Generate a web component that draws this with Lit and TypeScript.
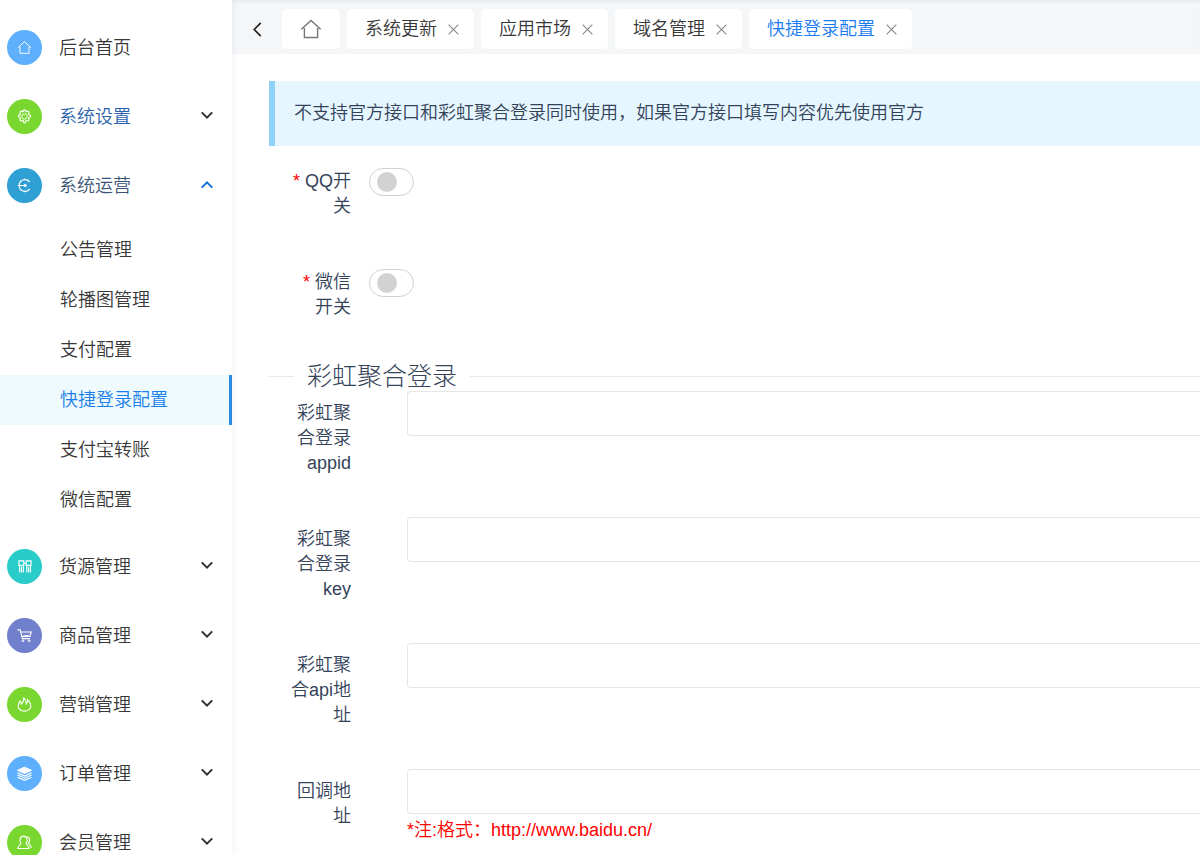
import { LitElement, html, css, svg } from "lit";
import { customElement, property, state } from "lit/decorators.js";
import { classMap } from "lit/directives/class-map.js";

const icons: Record<string, unknown> = {
  home: svg`<path d="M1 8.2 8 1.8l7 6.4M3.2 7.2v7h9.6v-7"/>`,
  gear: svg`<circle cx="8" cy="8" r="2.800"/><path d="M8 .9c1.100 0 1.300.5 1.500 1.900l.5.2c1.200-.9 1.800-1 2.500-.2s.7 1.400-.2 2.500l.3.7c1.400.2 2 .5 2 1.500s-.5 1.400-2 1.600l-.3.700c.9 1.100.9 1.700.2 2.500s-1.400.7-2.500-.2l-.5.2C9.300 13.700 9.100 15.100 8 15.100s-1.300-1.400-1.500-2.800l-.5-.2c-1.200.9-1.800.9-2.500.2s-.7-1.400.2-2.500l-.3-.7c-1.400-.2-2-.6-2-1.600s.6-1.300 2-1.500l.3-.7c-.9-1.100-.9-1.700-.2-2.500s1.300-.7 2.500.2l.5-.2C6.700 1.400 6.900.9 8 .9z" stroke-width="1.200"/>`,
  run: svg`<path d="M13.600 4.200A6.300 6.300 0 1 0 13.600 11.800M1 8h7M8 .8v1.500M8 13.700v1.500M3 3l1 1M3 13l1-1M13 3l-.8 1M13 13l-.8-1" stroke-width="1.300"/><circle cx="8.800" cy="8" r="1.200" fill="currentColor"/>`,
  goods: svg`<path d="M2 2h5.200v4.800H2zM9.800 2H15v4.800H9.800zM2.800 6.800V14.500M4.800 8.500v6M6.800 6.800V14.500M10.400 6.800V14.500M12.400 8.500v6M14.400 6.800V14.500M7.200 4.500h2.600" stroke-width="1.200"/>`,
  cart: svg`<path d="M.5 2h2.800l2.500 9.300h8M3.900 4.300h11.300L13.800 9H5.200M6.500 8.600l6-.8" stroke-width="1.200"/><circle cx="6.300" cy="13.600" r="1"/><circle cx="12.900" cy="13.600" r="1"/>`,
  fire: svg`<path d="M5.500 14.600C3 13.800 1.300 12 1.300 9.600c0-2 1.300-3.200 1.700-5.400 1.200.9 1.700 2 1.700 3.300C6.500 6 7.300 3.700 7.200 1c1.900 1.700 2.700 3.800 2.600 6.200.8-.8 1.600-2.200 1.600-4.400 1.900 1.900 3.300 4.300 3.300 6.900 0 2.500-1.600 4.200-4.200 4.900" stroke-width="1.200"/><path d="M5.500 14.600c1.600.6 3.400.6 5 0" stroke-width="1.200"/>`,
  layers: svg`<path d="M8 1.200 15.500 4.600 8 8 .5 4.600z" fill="currentColor"/><path d="m.5 7.300 7.500 3.400 7.500-3.400M.5 9.600 8 13l7.500-3.400M.5 11.900 8 15.300l7.500-3.400" stroke-width="1.200"/>`,
  user: svg`<path d="M4.300 9C3 7.700 2.800 5.800 3.300 4.300 3.900 2.400 5.200 1.200 7 1.200s3.100 1.200 3.700 3.100c.5 1.500.2 3.500-1.100 4.700.2 1.500 3.300 1.900 3.300 5.400H.9C.9 10.900 4.100 10.500 4.300 9zM10.800 1.800c1.700.3 2.600 1.700 2.700 3.300.1 1.400-.4 2.600-1.300 3.400.4 1.500 3 2.100 3 5.400" stroke-width="1.200"/>`,
  up: svg`<path d="m2 11 6-6 6 6" stroke-width="2.400"/>`,
  down: svg`<path d="m2 5 6 6 6-6" stroke-width="2.400"/>`,
  back: svg`<path d="M11.500 1 4.500 8l7 7" stroke-width="1.800"/>`,
  close: svg`<path d="m2 2 12 12M14 2 2 14" stroke-width="1.400"/>`,
};

@customElement("ui-icon")
class UiIcon extends LitElement {
  @property() name = "";
  static styles = css`
    :host { display: inline-flex; width: 15px; height: 15px; }
    .glyph { width: 100%; height: 100%; fill: none; stroke: currentColor; stroke-width: 1; }
  `;
  render() {
    return html`<svg class="glyph" viewBox="0 0 16 16" aria-hidden="true">${icons[this.name]}</svg>`;
  }
}

interface MenuItem {
  label: string;
  icon: string;
  tone: string;
  children?: string[];
}

const menu: MenuItem[] = [
  { label: "后台首页", icon: "home", tone: "sky" },
  { label: "系统设置", icon: "gear", tone: "green", children: [] },
  {
    label: "系统运营", icon: "run", tone: "blue",
    children: ["公告管理", "轮播图管理", "支付配置", "快捷登录配置", "支付宝转账", "微信配置"],
  },
  { label: "货源管理", icon: "goods", tone: "teal", children: [] },
  { label: "商品管理", icon: "cart", tone: "violet", children: [] },
  { label: "营销管理", icon: "fire", tone: "green", children: [] },
  { label: "订单管理", icon: "layers", tone: "sky", children: [] },
  { label: "会员管理", icon: "user", tone: "green", children: [] },
];

@customElement("side-menu")
class SideMenu extends LitElement {
  @state() private open = "系统运营";
  static styles = css`
    :host { display: block; width: 232px; flex: none; padding-top: 13px; box-sizing: border-box; overflow: hidden; background: #fff; box-shadow: 0 0 8px rgba(0, 40, 60, 0.08); z-index: 1; }
    .item { display: flex; align-items: center; gap: 17px; width: 100%; height: 69px; padding: 0 18px 0 7px; border: 0; background: none; font: inherit; color: #383838; text-align: left; cursor: pointer; }
    .item.hovered { color: #2b62ae; }
    .item.open { color: #3a5575; }
    .disc { display: flex; align-items: center; justify-content: center; flex: none; width: 35px; height: 35px; border-radius: 50%; color: #fff; }
    .sky { background: #5fb0fc; }
    .green { background: #7ad72f; }
    .blue { background: #2fa0d4; }
    .teal { background: #2accca; }
    .violet { background: #7180cd; }
    .label { flex: 1; padding-top: 2px; }
    .arrow { width: 14px; height: 14px; padding-bottom: 4px; color: #333; }
    .open .arrow { color: #1272d8; padding-bottom: 2px; }
    .sub { padding: 5px 0 7px; }
    .link { display: block; padding: 0 0 0 60px; line-height: 50px; color: #383838; text-decoration: none; }
    .link.active { background: #effaff; color: #1a7fe8; border-right: 3px solid #2a8be0; }
  `;
  render() {
    return html`<nav aria-label="主菜单">
      ${menu.map((m) => {
        const open = this.open === m.label;
        return html`
          <button
            class=${classMap({ item: true, open, hovered: m.label === "系统设置" })}
            @click=${() => (this.open = open ? "" : m.label)}
          >
            <span class="disc ${m.tone}"><ui-icon name=${m.icon}></ui-icon></span>
            <span class="label">${m.label}</span>
            ${m.children ? html`<ui-icon class="arrow" name=${open ? "up" : "down"}></ui-icon>` : ""}
          </button>
          ${open && m.children?.length
            ? html`<div class="sub">
                ${m.children.map((c) => html`<a href="#" class=${classMap({ link: true, active: c === "快捷登录配置" })}>${c}</a>`)}
              </div>`
            : ""}
        `;
      })}
    </nav>`;
  }
}

@customElement("tab-bar")
class TabBar extends LitElement {
  static styles = css`
    :host { display: flex; align-items: center; gap: 7px; height: 54px; padding-top: 4px; box-sizing: border-box; background: #f5f6f8; box-shadow: inset 0 4px 4px -3px rgba(0, 0, 0, 0.08); }
    .btn { display: flex; align-items: center; justify-content: center; padding: 0; border: 0; background: none; font: inherit; color: inherit; cursor: pointer; }
    .back { width: 43px; height: 40px; padding-left: 7px; color: #222; }
    .tab { display: flex; align-items: center; height: 40px; border-radius: 5px; background: #fff; color: #383838; white-space: nowrap; }
    .home { width: 58px; color: #777; }
    .house { width: 22px; height: 22px; }
    .page { gap: 10px; padding: 0 14px 0 18px; }
    .name { padding-top: 1px; }
    .close { color: #888; }
    .cross { width: 13px; height: 13px; }
    .active { color: #1a7cf0; }
  `;
  render() {
    return html`
      <button class="btn back" aria-label="后退"><ui-icon name="back"></ui-icon></button>
      <button class="btn tab home" aria-label="首页"><ui-icon class="house" name="home"></ui-icon></button>
      ${["系统更新", "应用市场", "域名管理", "快捷登录配置"].map(
        (t, i) => html`<div class=${classMap({ tab: true, page: true, active: i === 3 })}>
          <button class="btn name">${t}</button>
          <button class="btn close" aria-label="关闭"><ui-icon class="cross" name="close"></ui-icon></button>
        </div>`
      )}
    `;
  }
}

@customElement("login-form")
class LoginForm extends LitElement {
  static styles = css`
    :host { display: block; padding: 27px 0 0 37px; color: #34435a; }
    .notice { margin: 0 0 13px; padding: 20px 19px; line-height: 25px; border-left: 6px solid #91d2fb; background: #e5f6ff; }
    .row { display: flex; align-items: flex-start; margin-bottom: 31px; }
    .label { flex: none; box-sizing: border-box; width: 100px; padding: 10px 18px; line-height: 25px; text-align: right; }
    .star { margin-right: 5px; color: #f00; }
    .switch { appearance: none; display: flex; align-items: center; box-sizing: border-box; width: 45px; height: 28px; margin: 9px 0 0; padding: 0 7px; border: 1px solid #d2d2d2; border-radius: 14px; background: #fff; cursor: pointer; }
    .switch::before { content: ""; width: 20px; height: 20px; border-radius: 50%; background: #d2d2d2; }
    .switch:checked { justify-content: flex-end; border-color: #1b83ea; }
    .switch:checked::before { background: #1b83ea; }
    .group { min-width: 0; margin: 0; padding: 0; border: 0; border-top: 1px solid #e9e9e9; }
    .title { margin-left: 25px; padding: 0 13px; font-size: 25px; font-weight: 300; line-height: 30px; }
    .field { flex: 1; min-width: 0; margin-left: 38px; }
    .text { display: block; box-sizing: border-box; width: 100%; height: 45px; padding: 0 12px; border: 1px solid #e6e6e6; border-right: 0; border-radius: 4px 0 0 4px; font: inherit; color: inherit; background: #fff; }
    .hint { margin: 4px 0 0; line-height: 25px; color: #f00; }
  `;
  render() {
    const toggles = [["qq", "QQ开关"], ["wechat", "微信开关"]];
    const fields = [
      ["appid", "彩虹聚合登录appid", ""],
      ["key", "彩虹聚合登录key", ""],
      ["api", "彩虹聚合api地址", ""],
      ["callback", "回调地址", "*注:格式：http://www.baidu.cn/"],
    ];
    return html`
      <p class="notice">不支持官方接口和彩虹聚合登录同时使用，如果官方接口填写内容优先使用官方</p>
      <form>
        ${toggles.map(
          ([id, label]) => html`<div class="row">
            <label class="label" for=${id}><span class="star">*</span>${label}</label>
            <input class="switch" type="checkbox" role="switch" id=${id} />
          </div>`
        )}
        <fieldset class="group">
          <legend class="title">彩虹聚合登录</legend>
          ${fields.map(
            ([id, label, hint]) => html`<div class="row">
              <label class="label" for=${id}>${label}</label>
              <div class="field">
                <input class="text" type="text" id=${id} />
                ${hint ? html`<p class="hint">${hint}</p>` : ""}
              </div>
            </div>`
          )}
        </fieldset>
      </form>
    `;
  }
}

@customElement("app-root")
class AppRoot extends LitElement {
  static styles = css`
    :host { display: flex; height: 100vh; overflow: hidden; background: #fff; font: 350 18px/25px "Liberation Sans", "Noto Sans CJK SC", sans-serif; }
    .main { flex: 1; min-width: 0; overflow: hidden; }
  `;
  render() {
    return html`
      <side-menu></side-menu>
      <main class="main">
        <tab-bar></tab-bar>
        <login-form></login-form>
      </main>
    `;
  }
}
